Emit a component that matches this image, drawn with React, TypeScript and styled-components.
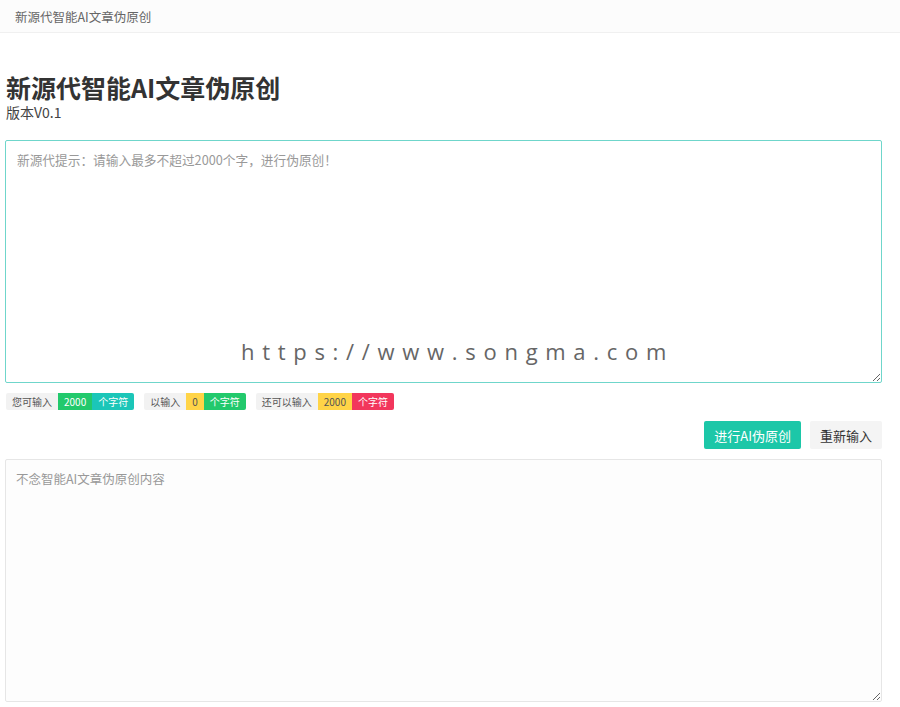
import React from 'react';
import styled, { createGlobalStyle } from 'styled-components';

// Constants
const COLORS = {
  TEAL: '#1cc7a8',
  CYAN: '#1bc6b8',
  GREEN: '#22c96c',
  YELLOW: '#ffd447',
  RED: '#f2365c',
  LABEL_BG: '#f2f2f2',
  TEXT: '#333',
  MUTED: '#999',
  BORDER: '#e6e6e6',
  FOCUS: '#6fd6cb'
};

const GlobalStyle = createGlobalStyle`
  html, body {
    margin: 0;
    padding: 0;
    background: #fff;
    font-family: "Microsoft YaHei", "Noto Sans CJK SC", "Liberation Sans", sans-serif;
    color: ${COLORS.TEXT};
  }
`;

const TopBar = styled.header`
  height: 32px;
  display: flex;
  align-items: center;
  padding-left: 15px;
  background: #fcfcfc;
  border-bottom: 1px solid #f0f0f0;
  font-size: 12.5px;
  color: #666;
`;

const Page = styled.main`
  width: 877px;
  padding-left: 5px;
`;

const Title = styled.h1`
  margin: 41px 0 0 1px;
  font-size: 25px;
  line-height: 26px;
  font-weight: 700;
  color: #333;
`;

const Version = styled.div`
  margin: 3px 0 0 1px;
  font-size: 14px;
  line-height: 18px;
  color: #444;
`;

const EditorWrap = styled.div`
  position: relative;
  margin-top: 19px;
  height: 243px;
`;

const SourceArea = styled.textarea`
  box-sizing: border-box;
  display: block;
  width: 100%;
  height: 100%;
  padding: 10px 11px;
  border-width: 1px;
  border-style: solid;
  border-color: ${COLORS.FOCUS};
  border-radius: 2px;
  outline: none;
  font-family: inherit;
  font-size: 12.7px;
  line-height: 18px;
  color: ${COLORS.TEXT};
  background: #fff;
  resize: vertical;

  &::placeholder {
    color: ${COLORS.MUTED};
  }
`;

const ResultArea = styled(SourceArea)`
  border-color: ${COLORS.BORDER};
  font-size: 12.5px;
  padding: 10px 10px;
  background: #fdfdfd;
`;

const Watermark = styled.div`
  position: absolute;
  left: 28px;
  right: 0;
  top: 196px;
  text-align: center;
  font-family: "Open Sans", "Liberation Sans", sans-serif;
  font-size: 22px;
  letter-spacing: 7.7px;
  color: #666;
  pointer-events: none;
`;

const CounterRow = styled.div`
  display: flex;
  align-items: center;
  gap: 10px;
  margin-top: 10px;
  margin-left: 1px;
`;

const Counter = styled.div`
  display: flex;
  height: 17px;
  font-size: 10px;
  line-height: 17px;
`;

const Cell = styled.span<{ $bg: string; $color?: string; $round?: 'left' | 'right' }>`
  padding: 0 6px;
  background: ${p => p.$bg};
  color: ${p => p.$color || '#fff'};
  border-radius: ${p => (p.$round === 'right' ? '0 2px 2px 0' : p.$round === 'left' ? '2px 0 0 2px' : '0')};
`;

const Actions = styled.div`
  display: flex;
  justify-content: flex-end;
  gap: 9px;
  margin-top: 11px;
`;

const Button = styled.button<{ $primary?: boolean }>`
  height: 28px;
  padding: 0 10px;
  border: none;
  border-radius: 2px;
  font-family: inherit;
  font-size: 13px;
  background: ${p => (p.$primary ? COLORS.TEAL : '#f4f4f4')};
  color: ${p => (p.$primary ? '#fff' : '#333')};
  cursor: pointer;
`;

const ResultWrap = styled.div`
  margin-top: 10px;
  height: 243px;
`;

const counters = [
  { label: '您可输入', value: '2000', valueBg: COLORS.GREEN, unitBg: COLORS.CYAN, dark: false },
  { label: '以输入', value: '0', valueBg: COLORS.YELLOW, unitBg: COLORS.GREEN, dark: true },
  { label: '还可以输入', value: '2000', valueBg: COLORS.YELLOW, unitBg: COLORS.RED, dark: true }
];

const App: React.FC = () => {
  return (
    <>
      <GlobalStyle />
      <TopBar>新源代智能AI文章伪原创</TopBar>
      <Page>
        <Title>新源代智能AI文章伪原创</Title>
        <Version>版本V0.1</Version>

        <EditorWrap>
          <SourceArea placeholder="新源代提示：请输入最多不超过2000个字，进行伪原创！" />
          <Watermark>https://www.songma.com</Watermark>
        </EditorWrap>

        <CounterRow>
          {counters.map(c => (
            <Counter key={c.label}>
              <Cell $bg={COLORS.LABEL_BG} $color="#555" $round="left">{c.label}</Cell>
              <Cell $bg={c.valueBg} $color={c.dark ? '#555' : '#fff'}>{c.value}</Cell>
              <Cell $bg={c.unitBg} $round="right">个字符</Cell>
            </Counter>
          ))}
        </CounterRow>

        <Actions>
          <Button $primary>进行AI伪原创</Button>
          <Button>重新输入</Button>
        </Actions>

        <ResultWrap>
          <ResultArea placeholder="不念智能AI文章伪原创内容" />
        </ResultWrap>
      </Page>
    </>
  );
};

export default App;
